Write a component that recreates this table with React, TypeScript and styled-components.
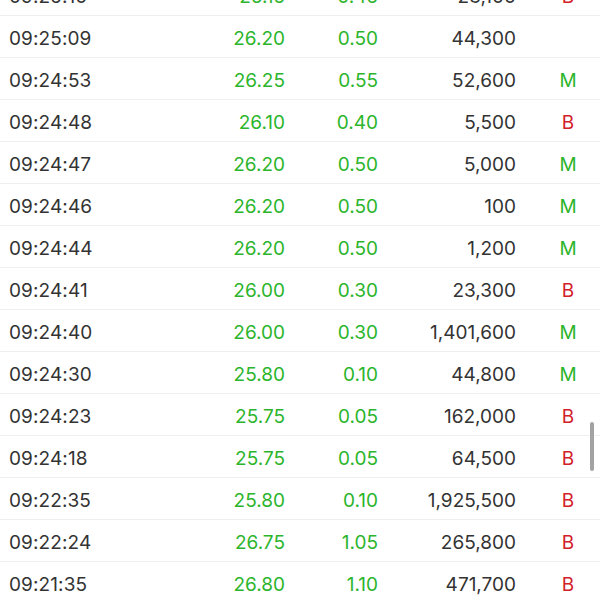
import styled, { createGlobalStyle } from "styled-components";

const GlobalStyle = createGlobalStyle`
    html, body {
        margin: 0;
        padding: 0;
        background: #ffffff;
    }
    body {
        font-family: Inter, "Liberation Sans", "Noto Sans", sans-serif;
    }
`;

const Screen = styled.div`
    position: relative;
    width: 600px;
    height: 600px;
    overflow: hidden;
    background: #ffffff;
`;

const TradeList = styled.ul`
    list-style: none;
    margin: -26px 0 0 0;
    padding: 0;
`;

const Row = styled.li`
    box-sizing: border-box;
    display: grid;
    grid-template-columns: 180px 96px 93px 138px 1fr;
    align-items: center;
    height: 42px;
    padding: 4px 0 0 9px;
    border-bottom: 1px solid #efefef;
    font-size: 19px;
    color: #333333;
`;

const Time = styled.span`
    letter-spacing: 0.1px;
`;

const Num = styled.span<{ $green?: boolean }>`
    text-align: right;
    color: ${(props) => (props.$green ? "#2cb52c" : "#333333")};
`;

const Flag = styled.span<{ $type: string }>`
    text-align: center;
    padding-left: 20px;
    color: ${(props) => (props.$type === "B" ? "#d3202a" : "#2cb52c")};
`;

const ScrollThumb = styled.div`
    position: absolute;
    right: 6px;
    top: 422px;
    width: 4px;
    height: 49px;
    border-radius: 2px;
    background: #a3a3a3;
`;

interface ITrade {
    time: string;
    price: string;
    change: string;
    volume: string;
    flag: string;
}

const trades: ITrade[] = [
    { time: "09:25:10", price: "26.15", change: "0.45", volume: "23,100", flag: "B" },
    { time: "09:25:09", price: "26.20", change: "0.50", volume: "44,300", flag: "" },
    { time: "09:24:53", price: "26.25", change: "0.55", volume: "52,600", flag: "M" },
    { time: "09:24:48", price: "26.10", change: "0.40", volume: "5,500", flag: "B" },
    { time: "09:24:47", price: "26.20", change: "0.50", volume: "5,000", flag: "M" },
    { time: "09:24:46", price: "26.20", change: "0.50", volume: "100", flag: "M" },
    { time: "09:24:44", price: "26.20", change: "0.50", volume: "1,200", flag: "M" },
    { time: "09:24:41", price: "26.00", change: "0.30", volume: "23,300", flag: "B" },
    { time: "09:24:40", price: "26.00", change: "0.30", volume: "1,401,600", flag: "M" },
    { time: "09:24:30", price: "25.80", change: "0.10", volume: "44,800", flag: "M" },
    { time: "09:24:23", price: "25.75", change: "0.05", volume: "162,000", flag: "B" },
    { time: "09:24:18", price: "25.75", change: "0.05", volume: "64,500", flag: "B" },
    { time: "09:22:35", price: "25.80", change: "0.10", volume: "1,925,500", flag: "B" },
    { time: "09:22:24", price: "26.75", change: "1.05", volume: "265,800", flag: "B" },
    { time: "09:21:35", price: "26.80", change: "1.10", volume: "471,700", flag: "B" },
    { time: "09:21:20", price: "26.80", change: "1.10", volume: "12,000", flag: "M" },
];

function App() {
    return (
        <>
            <GlobalStyle />
            <Screen>
                <TradeList>
                    {trades.map((t, i) => (
                        <Row key={i}>
                            <Time>{t.time}</Time>
                            <Num $green>{t.price}</Num>
                            <Num $green>{t.change}</Num>
                            <Num>{t.volume}</Num>
                            <Flag $type={t.flag}>{t.flag}</Flag>
                        </Row>
                    ))}
                </TradeList>
                <ScrollThumb />
            </Screen>
        </>
    );
}

export default App;
